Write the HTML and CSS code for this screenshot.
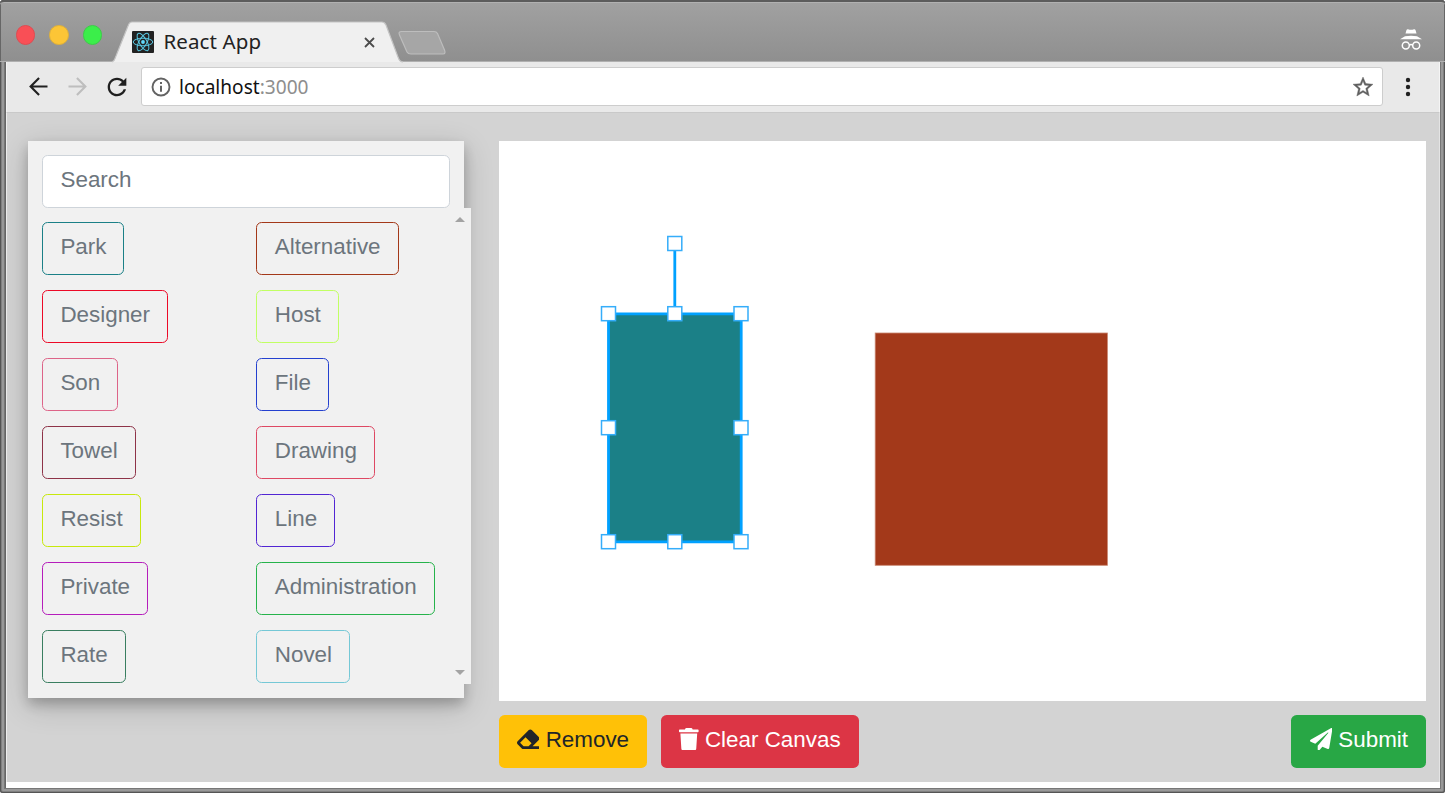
FILE: index.html
```html
<!DOCTYPE html>
<html lang="en">
<head>
<meta charset="utf-8">
<title>React App</title>
<link rel="stylesheet" href="styles.css">
</head>
<body>
<div class="window">
  <header class="tabstrip">
    <div class="lights"><i class="light red"></i><i class="light yellow"></i><i class="light green"></i></div>
    <div class="tab">
      <svg class="tab-shape" width="290" height="41" viewBox="0 0 290 41"><path d="M-1 41C2 40 2 37 3 35L15 5C16 2 17 1 19 1H269C271 1 272 2 273 4L285 36C286 39 287 41 290 41Z" fill="#f0f0f0"/><path d="M-1 41C2 40 2 37 3 35L15 5C16 2 17 1 19 1H269C271 1 272 2 273 4L285 36C286 39 287 41 290 41" fill="none" stroke="#c4c4c4" stroke-width="1.2"/></svg>
      <svg class="favicon" width="22" height="22" viewBox="0 0 22 22"><rect width="22" height="22" rx="1" fill="#222"/><g fill="none" stroke="#5ac8e2" stroke-width="1"><ellipse cx="11" cy="11" rx="9.8" ry="3.8"/><ellipse cx="11" cy="11" rx="9.8" ry="3.8" transform="rotate(60 11 11)"/><ellipse cx="11" cy="11" rx="9.8" ry="3.8" transform="rotate(120 11 11)"/></g><circle cx="11" cy="11" r="1.9" fill="#61dafb"/></svg>
      <span class="tab-title">React App</span>
      <svg class="tab-close" width="11" height="11" viewBox="0 0 11 11"><path d="M1 1L10 10M10 1L1 10" stroke="#4c4c4c" stroke-width="1.8"/></svg>
    </div>
    <svg class="new-tab" width="50" height="26" viewBox="0 0 50 26"><path d="M4.500 1.500H37Q39.500 1.500 40.500 3.500L47.500 20Q49 24 46 24H14Q11 24 10 22L2.500 5Q1 1.500 4.500 1.500Z" fill="#a6a6a6" stroke="#bdbdbd" stroke-width="1.2"/></svg>
    <svg class="incognito" width="22" height="22" viewBox="0 0 22 22"><path d="M6.500 2Q7 1 8 1.300Q11 2.300 14 1.300Q15 1 15.500 2L16.500 5.500H5.500ZM5 8.200Q11 7.200 17 8.200L22 11.200H0Z" fill="#fff"/><g fill="none" stroke="#fff" stroke-width="1.500"><circle cx="5.800" cy="17.500" r="3.500"/><circle cx="16.200" cy="17.500" r="3.500"/><path d="M9.200 17.200Q11 15.900 12.800 17.200"/></g></svg>
  </header>
  <div class="toolbar">
    <svg class="nav-icon back" width="27" height="27" viewBox="0 0 24 24" fill="none" stroke="#202020" stroke-width="1.900"><path d="M20 12H5M12.500 4.500L5 12l7.500 7.500"/></svg>
    <svg class="nav-icon forward" width="27" height="27" viewBox="0 0 24 24" fill="none" stroke="#bebebe" stroke-width="1.900"><path d="M4 12h15M11.500 4.500L19 12l-7.500 7.500"/></svg>
    <svg class="nav-icon reload" width="28" height="28" viewBox="0 0 24 24" fill="#202020"><path d="M17.650 6.350C16.200 4.900 14.210 4 12 4c-4.420 0-7.990 3.580-7.990 8s3.570 8 7.990 8c3.730 0 6.840-2.550 7.730-6h-2.080c-.82 2.330-3.040 4-5.650 4-3.310 0-6-2.690-6-6s2.690-6 6-6c1.660 0 3.140.69 4.220 1.780L13 11h7V4l-2.350 2.350z"/></svg>
    <div class="address">
      <svg width="20" height="20" viewBox="0 0 20 20"><circle cx="10" cy="10" r="8.500" fill="none" stroke="#636363" stroke-width="1.900"/><path d="M9 5h2v2H9zM9 8.700h2v6H9z" fill="#636363"/></svg>
      <span class="url">localhost<span class="port">:3000</span></span>
      <svg class="star" width="24" height="24" viewBox="0 0 24 24" fill="#5f5f5f" stroke="#5f5f5f" stroke-width=".4"><path d="M22 9.240l-7.190-.62L12 2 9.190 8.630 2 9.240l5.460 4.730L5.820 21 12 17.270 18.180 21l-1.630-7.030L22 9.240zM12 15.400l-3.760 2.270 1-4.280-3.320-2.880 4.380-.38L12 6.100l1.710 4.040 4.380.38-3.320 2.880 1 4.280L12 15.400z"/></svg>
    </div>
    <svg class="menu" width="6" height="20" viewBox="0 0 6 20" fill="#202020"><circle cx="3" cy="3" r="2.200"/><circle cx="3" cy="10" r="2.200"/><circle cx="3" cy="17" r="2.200"/></svg>
  </div>
  <main class="page">
    <aside class="panel">
      <input class="search" type="text" placeholder="Search" aria-label="Search">
      <div class="list">
        <div class="tags">
          <span class="tag teal">Park</span><span class="tag rust">Alternative</span>
          <span class="tag scarlet">Designer</span><span class="tag lime">Host</span>
          <span class="tag pink">Son</span><span class="tag blue">File</span>
          <span class="tag wine">Towel</span><span class="tag rose">Drawing</span>
          <span class="tag citron">Resist</span><span class="tag indigo">Line</span>
          <span class="tag magenta">Private</span><span class="tag emerald">Administration</span>
          <span class="tag pine">Rate</span><span class="tag sky">Novel</span>
        </div>
        <div class="scrollbar"><i class="arrow up"></i><i class="arrow down"></i></div>
      </div>
    </aside>
    <section class="workspace">
      <svg class="canvas" width="927" height="560" viewBox="499 141 927 560">
        <rect x="875.200" y="333" width="232.200" height="232.300" fill="#a3391a" stroke="#c98670" stroke-width=".8"/>
        <rect x="608.500" y="313.800" width="132.700" height="228" fill="#1b8087"/>
        <path d="M674.800 243.500V313.800M608.500 313.800H741.200V541.800H608.500Z" fill="none" stroke="#00a1ff" stroke-width="2.800"/>
        <g fill="#fff" stroke="#35adfa" stroke-width="1.500">
          <rect x="667.800" y="236.500" width="14" height="14"/>
          <rect x="601.500" y="306.700" width="14" height="14"/>
          <rect x="667.800" y="306.700" width="14" height="14"/>
          <rect x="734" y="306.700" width="14" height="14"/>
          <rect x="601.500" y="420.700" width="14" height="14"/>
          <rect x="734" y="420.700" width="14" height="14"/>
          <rect x="601.500" y="534.700" width="14" height="14"/>
          <rect x="667.800" y="534.700" width="14" height="14"/>
          <rect x="734" y="534.700" width="14" height="14"/>
        </g>
      </svg>
      <div class="actions">
        <button class="btn warning"><svg width="22.400" height="22.400" viewBox="0 0 512 512"><path d="M497.941 273.941c18.745-18.745 18.745-49.137 0-67.882l-160-160c-18.745-18.745-49.136-18.746-67.883 0l-256 256c-18.745 18.745-18.745 49.137 0 67.882l96 96A48.004 48.004 0 0 0 144 480h356c6.627 0 12-5.373 12-12v-40c0-6.627-5.373-12-12-12H355.883l142.058-142.059zm-302.627-62.627l137.373 137.373L265.373 416H150.628l-80-80 124.686-124.686z"/></svg>Remove</button>
        <button class="btn danger"><svg width="19.600" height="22.400" viewBox="0 0 448 512"><path d="M432 32H312l-9.400-18.700A24 24 0 0 0 281.100 0H166.800a23.720 23.720 0 0 0-21.400 13.300L136 32H16A16 16 0 0 0 0 48v32a16 16 0 0 0 16 16h416a16 16 0 0 0 16-16V48a16 16 0 0 0-16-16zM53.200 467a48 48 0 0 0 47.900 45h245.800a48 48 0 0 0 47.900-45L416 128H32z"/></svg>Clear Canvas</button>
        <button class="btn success"><svg width="22.400" height="22.400" viewBox="0 0 512 512"><path d="M476 3.200L12.500 270.600c-18.100 10.400-15.800 35.600 2.200 43.200L121 358.400l287.300-253.200c5.500-4.900 13.300 2.600 8.600 8.300L176 407v80.500c0 23.600 28.500 32.900 42.500 15.800L282 426l124.600 52.200c14.200 6 30.400-2.900 33-18.200l72-432C515 7.800 493.300-6.800 476 3.200z"/></svg>Submit</button>
      </div>
    </section>
  </main>
</div>
</body>
</html>
```
FILE: styles.css
```css
* { box-sizing: border-box; }
body { margin: 0; background: #fff; overflow: hidden; font-family: "Liberation Sans", Arial, sans-serif; }
.window {
  width: 1445px; height: 793px; padding: 0 5px 5px 6px;
  display: flex; flex-direction: column;
  background: #666;
  border-radius: 4px 4px 3px 3px;
  box-shadow: inset 0 0 0 1px #555, inset 0 0 0 2px #808080, inset 0 0 0 4px #999, inset 0 0 0 5px #777;
}
.tabstrip {
  flex: none; height: 62px; display: flex; align-items: flex-start;
  margin: 0 -5px 0 -6px; padding: 0 23px 0 15.500px;
  background: linear-gradient(#a1a1a1, #8f8f8f);
  border-top: 2px solid #5c5c5c;
  border-bottom: 1px solid #b0b0b0;
  border-radius: 4px 4px 0 0;
  box-shadow: inset 0 1px #b1b1b1, inset 1px 0 #666, inset -1px 0 #666;
}
.lights { display: flex; gap: 14px; padding-top: 23px; }
.light { width: 19.500px; height: 19.500px; border-radius: 50%; border: 1px solid; }
.red { background: #f94f56; border-color: #df4b51; }
.yellow { background: #fcc536; border-color: #ddb03c; }
.green { background: #3bee4a; border-color: #3dcc49; }
.tab { position: relative; width: 290px; height: 41px; margin: 19px 0 0 11px; padding: 1px 26px 0 19px; display: flex; align-items: center; }
.tab-shape { position: absolute; left: 0; top: 0; overflow: visible; }
.favicon, .tab-title, .tab-close { position: relative; }
.tab-title { margin: -2px 0 0 9.500px; font: 20.500px/30px "Noto Sans", sans-serif; color: #222; letter-spacing: .1px; white-space: nowrap; }
.tab-close { margin-left: auto; margin-right: 2px; }
.new-tab { margin: 28px 0 0 -6.500px; }
.incognito { margin: 26px 0 0 auto; }
.toolbar { flex: none; height: 51px; background: #e9e9e9; border-bottom: 1px solid #c9c9c9; border-left: 1px solid #f5f5f5; border-right: 1px solid #f5f5f5; display: flex; align-items: center; padding: 0 28px 1px 17.500px; }
.back { margin-right: 12px; }
.forward { margin-right: 12px; }
.reload { margin-right: 10.500px; }
.address { flex: 1; height: 39px; margin-right: 22px; padding: 0 7px 0 9px; display: flex; align-items: center; background: #fff; border: 1px solid #cdcdcd; border-radius: 3px; }
.url { margin-left: 8px; font: 19.100px/30px "Noto Sans", sans-serif; color: #111; white-space: nowrap; }
.port { color: #8e8e8e; }
.star { margin-left: auto; }
.page { flex: 1; margin-bottom: 6px; padding: 28px 13px 0 21px; border-left: 1px solid #eee; border-right: 1px solid #e4e4e4; background: #d3d3d3; display: flex; align-items: flex-start; gap: 35px; }
.window::after { content: ""; height: 6px; flex: none; background: #fff; margin-top: -6px; }
.panel { width: 436px; height: 557px; padding: 14px; background: #f1f1f1; box-shadow: 0 5.600px 11.200px rgba(0,0,0,.2), 0 8.400px 28px rgba(0,0,0,.19); }
.search { display: block; width: 408px; height: 53px; padding: 5px 17.500px 9px; border: 1px solid #ced4da; border-radius: 5.600px; background: #fff; font: 22.400px/33.600px "Liberation Sans", Arial, sans-serif; }
.search::placeholder { color: #6c757d; opacity: 1; }
.list { width: 429px; height: 476px; display: flex; background: #f1f1f1; }
.tags { flex: 1; padding-top: 14px; display: grid; grid-template-columns: 214.400px 1fr; grid-auto-rows: 53px; row-gap: 15px; justify-items: start; }
.tag { padding: 6px 17px 0 17.400px; border: 1px solid; border-radius: 5.600px; font-size: 22.400px; line-height: 36px; white-space: nowrap; -webkit-text-fill-color: #6c757d; }
.teal { color: #1b8087; }
.rust { color: #a33819; }
.scarlet { color: #ec0927; }
.lime { color: #c1ff63; }
.pink { color: #dd6488; }
.blue { color: #2440cf; }
.wine { color: #8e3348; }
.rose { color: #de4863; }
.citron { color: #c7e80c; }
.indigo { color: #5226d3; }
.magenta { color: #b51dbb; }
.emerald { color: #26b34b; }
.pine { color: #397e60; }
.sky { color: #75c8d6; }
.scrollbar { width: 21px; padding: 9px 6px 9px 4px; display: flex; flex-direction: column; justify-content: space-between; align-items: center; }
.arrow { border: 5px solid transparent; }
.up { border-top: 0; border-bottom-color: #a3a3a3; }
.down { border-bottom: 0; border-top-color: #a3a3a3; }
.workspace { flex: 1; }
.canvas { display: block; background: #fff; }
.actions { margin-top: 14px; display: flex; gap: 14px; }
.btn { height: 53px; display: flex; align-items: center; gap: 6.300px; padding: 0 18px 5px; border: 0; border-radius: 5.600px; font: 22.400px/33px "Liberation Sans", Arial, sans-serif; color: #fff; white-space: nowrap; }
.btn svg { fill: currentColor; }
.warning { background: #ffc107; color: #212529; }
.danger { background: #dc3545; }
.success { background: #28a745; margin-left: auto; padding-left: 18.600px; }
```
